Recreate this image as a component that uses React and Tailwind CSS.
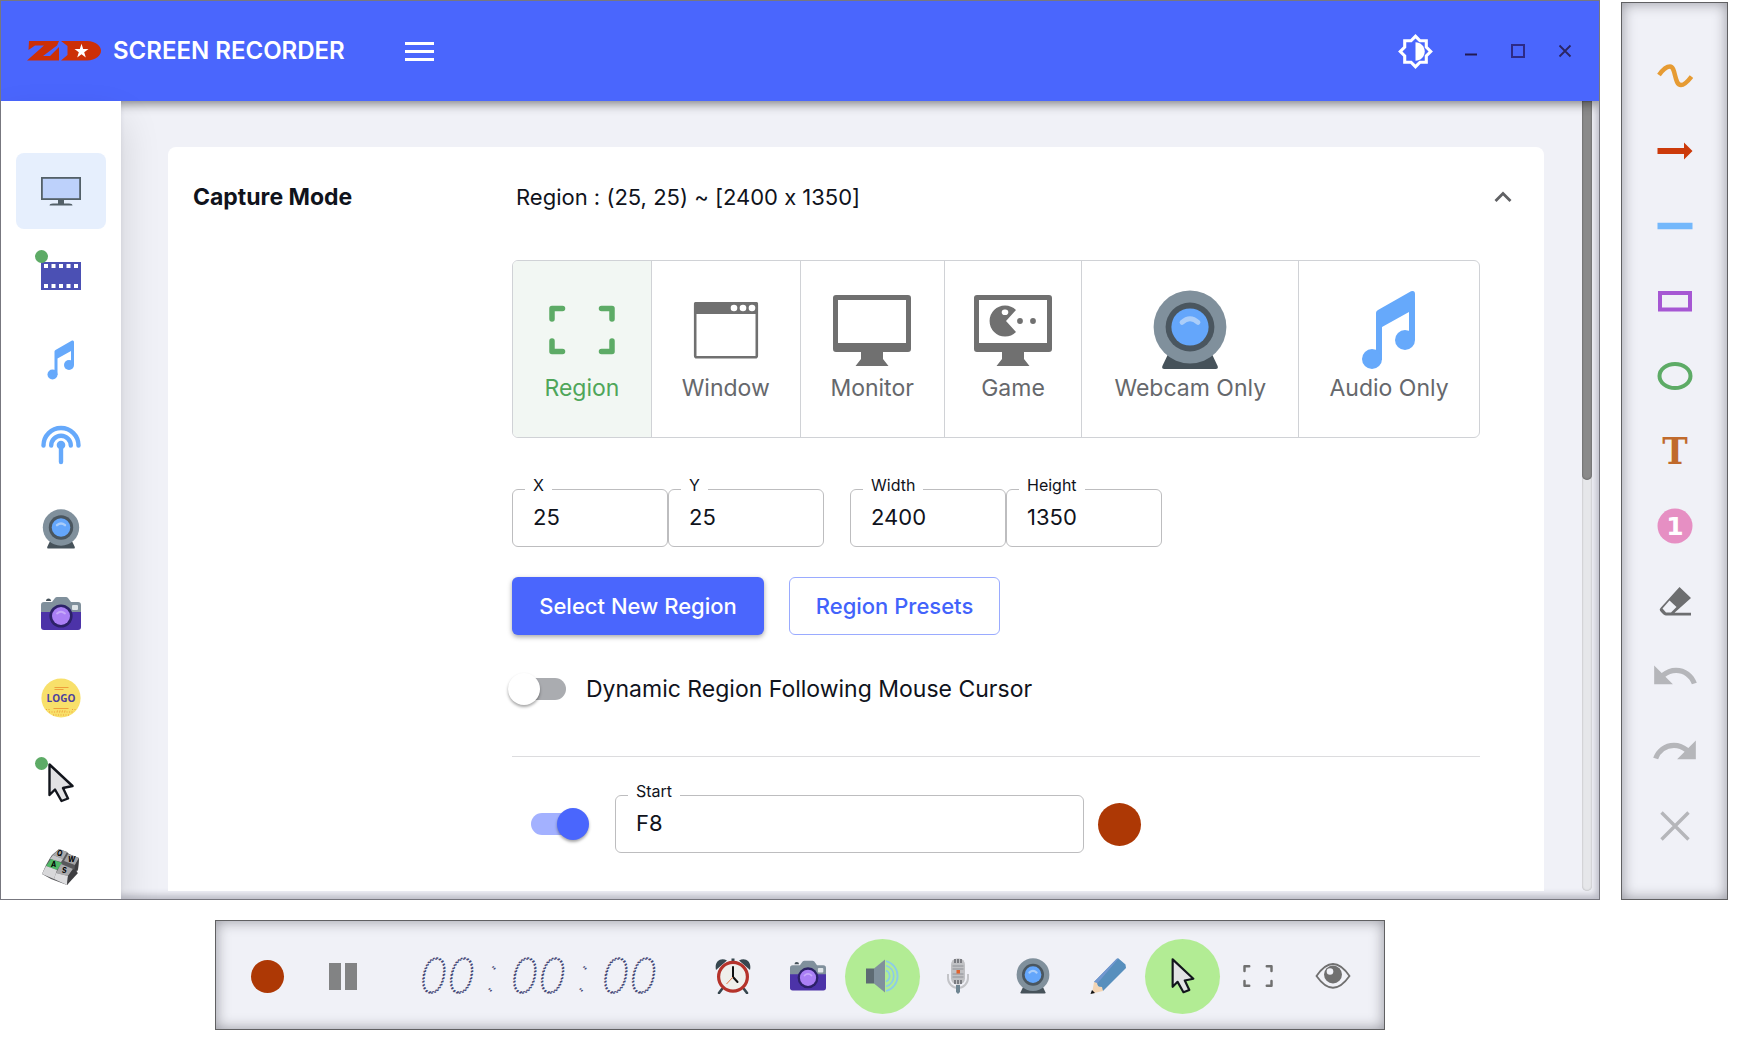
import { useState } from "react";
import { MdUndo, MdRedo } from "react-icons/md";

function LogoMark() {
  return (
    <svg width="74" height="20" viewBox="0 0 74 20" fill="#cc2f06" aria-hidden="true">
      <path d="M2 0H32L30 4.500 16 15H23L32 6V19.500H0L17 4.500H8L1.500 9Z" />
      <path d="M34 0H60C69 0.500 74 5 74 9.700S69 19 60 19.500H34L40.500 14V5Z" />
      <path
        fill="#fff"
        d="M54.500 2.800 56.200 8H61.500L57.200 11.200 58.800 16.500 54.500 13.300 50.200 16.500 51.800 11.200 47.500 8H52.800Z"
      />
    </svg>
  );
}

function BrightnessIcon() {
  return (
    <svg width="37" height="37" viewBox="0 0 24 24" fill="#fff" aria-hidden="true">
      <path
        fillRule="evenodd"
        d="M20 8.690V4h-4.690L12 .690 8.690 4H4v4.690L.690 12 4 15.310V20h4.690L12 23.310 15.310 20H20v-4.690L23.310 12 20 8.690zM18 14.480V18h-3.520L12 20.480 9.520 18H6v-3.520L3.520 12 6 9.520V6h3.520L12 3.520 14.480 6H18v3.520L20.480 12 18 14.480z"
      />
      <path d="M12 6v12c3.310 0 6-2.690 6-6s-2.690-6-6-6z" />
    </svg>
  );
}

function DesktopIcon() {
  return (
    <svg width="40" height="40" viewBox="0 0 40 40" aria-hidden="true">
      <rect y="6" width="40" height="23" fill="#536068" />
      <rect x="1.800" y="7.800" width="36.400" height="19.400" fill="#bdd1fb" />
      <path d="M17 29h6v3.500h5q3.500 0 3.500 2h-23q0-2 3.500-2h5z" fill="#536068" />
    </svg>
  );
}

function FilmIcon() {
  return (
    <svg width="40" height="40" viewBox="0 0 40 40" aria-hidden="true">
      <rect y="6" width="40" height="28" fill="#4b50b4" />
      {[3, 10.5, 18, 25.5, 33].map((x) => (
        <g key={x} fill="#fff">
          <rect x={x} y="8" width="4" height="4" />
          <rect x={x} y="28" width="4" height="4" />
        </g>
      ))}
    </svg>
  );
}

function MusicIcon({ size = 40 }) {
  return (
    <svg width={size} height={size} viewBox="0 0 40 40" fill="#66a9fb" aria-hidden="true">
      <path d="M13.500 11.500Q13.500 10.500 14.500 10L31 0.600Q33 0 33 2V25H30V11L16.500 18.500V35H13.500Z" />
      <circle cx="28" cy="25" r="5" />
      <circle cx="11.500" cy="34.500" r="5" />
    </svg>
  );
}

function BroadcastIcon() {
  return (
    <svg width="40" height="40" viewBox="0 0 40 40" fill="none" stroke="#66a9fb" strokeWidth="4.400" strokeLinecap="round" aria-hidden="true">
      <path d="M2.500 20.500a17.500 17.500 0 0 1 35 0" />
      <path d="M10.200 20.500a9.800 9.800 0 0 1 19.600 0" />
      <path d="M20 20v17" />
      <circle cx="20" cy="20" r="4.300" fill="#66a9fb" stroke="none" />
    </svg>
  );
}

function WebcamIcon({ size = 40 }) {
  return (
    <svg width={size} height={size} viewBox="0 0 40 40" aria-hidden="true">
      <path d="M10 30h20l3.800 8q.5 1.500-1 1.500H7.200q-1.500 0-1-1.500z" fill="#46525a" />
      <circle cx="20" cy="18.500" r="18.200" fill="#80909c" />
      <circle cx="20" cy="18.500" r="12.200" fill="#4a565f" />
      <circle cx="20" cy="18.500" r="9.300" fill="#64a6fb" />
      <path d="M16 16.200q4-3.600 8 0" fill="none" stroke="#aacdf9" strokeWidth="2.400" strokeLinecap="round" />
    </svg>
  );
}

function CameraIcon({ size = 40 }) {
  return (
    <svg width={size} height={size} viewBox="0 0 40 40" aria-hidden="true">
      <path d="M5 7q0-2.500 2.500-2.500T10 7z" fill="#46525a" />
      <path d="M3 8h8l3-4q.8-1 2-1h9q1.200 0 2 1l3 4h7q3 0 3 3v8H0v-8q0-3 3-3z" fill="#80909c" />
      <path d="M0 18h40v15q0 3-3 3H3q-3 0-3-3z" fill="#4c33a8" />
      <circle cx="20" cy="22" r="11.600" fill="#2c2168" />
      <circle cx="20" cy="22" r="9" fill="#aa7ff5" />
      <path d="M16 19.500q4-3.600 8 0" fill="none" stroke="#c6a9fa" strokeWidth="1.800" strokeLinecap="round" />
      <rect x="31" y="11" width="6" height="5" rx="1" fill="#dfe5e8" />
    </svg>
  );
}

function BadgeIcon() {
  return (
    <svg width="40" height="40" viewBox="0 0 40 40" aria-hidden="true">
      <circle cx="20" cy="20" r="19.600" fill="#f8e06a" />
      <g stroke="#ee9f3b" strokeWidth="1">
        <path d="M13.500 9.500h14M13.500 11.500h9M12.500 30.500h15" />
        <path d="M16 33h9M5 31.500h4M31 31.500h4M8 34h24M12 37h16" strokeDasharray="1 1.500" />
      </g>
      <text x="20" y="24" textAnchor="middle" fontFamily="Open Sans, sans-serif" fontWeight="700" fontSize="10" fill="#4c3f9f">
        LOGO
      </text>
    </svg>
  );
}

function CursorIcon({ size = 40 }) {
  return (
    <svg width={size} height={size} viewBox="0 0 40 40" aria-hidden="true">
      <path
        d="M8.500 1.500V32L14 26.500 20.500 38 27 35.500 22 25 31.500 23Z"
        fill="#e2e2e4"
        stroke="#12151c"
        strokeWidth="2.400"
        strokeLinejoin="round"
      />
    </svg>
  );
}

function KeysIcon() {
  return (
    <svg width="40" height="40" viewBox="0 0 40 40" fontFamily="Inter, sans-serif" fontWeight="700" fontSize="7" aria-hidden="true">
      <path d="M18 2 26 5 28 7 38 11 37 23 26 38 10 32 1 27 5 18 9 11 11 8Z" fill="#58585b" />
      <path d="M18 2 26 5 22 12 12 8Z" fill="#a9a9ab" />
      <path d="M12 8 22 12 20 15 9 12Z" fill="#c6c6c8" />
      <path d="M27 7 38 11 34 18 23 14Z" fill="#a3a3a5" />
      <path d="M38 11 37 22 33 25 34 18Z" fill="#3e3e41" />
      <path d="M10 12 21 16 16 23 5 19Z" fill="#4fb866" />
      <path d="M5 19 16 23 13 32 1 27Z" fill="#d8d8da" />
      <path d="M20 17 32 22 27 29 15 26Z" fill="#a9a9ab" />
      <path d="M15 26 27 29 26 38 13 32Z" fill="#dcdcde" />
      <path d="M32 22 37 26 26 38 27 29Z" fill="#3e3e41" />
      <text x="16" y="9" fontStyle="italic">Q</text>
      <text x="27" y="15" fontStyle="italic">W</text>
      <text x="10" y="20" fontStyle="italic">A</text>
      <text x="21" y="26" fontStyle="italic">S</text>
    </svg>
  );
}

function RegionIcon({ size, color }) {
  return (
    <svg width={size} height={size} viewBox="0 0 80 80" fill="none" stroke={color} strokeWidth="5.500" strokeLinecap="round" strokeLinejoin="round" aria-hidden="true">
      <path d="M10 29V18.500H20.500M59.500 18.500H70V29M70 51V61.500H59.500M20.500 61.500H10V51" />
    </svg>
  );
}

function WindowIcon() {
  return (
    <svg width="80" height="80" viewBox="0 0 80 80" aria-hidden="true">
      <rect x="9.200" y="13.200" width="61.600" height="54" rx="1.500" fill="none" stroke="#707070" strokeWidth="2.600" />
      <rect x="8" y="12" width="64" height="12" rx="1.500" fill="#707070" />
      <g fill="#fff">
        <circle cx="48" cy="18" r="3.300" />
        <circle cx="57" cy="18" r="3.300" />
        <circle cx="66" cy="18" r="3.300" />
      </g>
    </svg>
  );
}

function MonitorIcon({ game }) {
  return (
    <svg width="80" height="80" viewBox="0 0 80 80" fill="#707070" aria-hidden="true">
      <path fillRule="evenodd" d="M4 5H76Q79 5 79 8V59Q79 62 76 62H4Q1 62 1 59V8Q1 5 4 5ZM6 10V53H74V10Z" />
      <path d="M29 61H51V69L56.500 76H23.500L29 69Z" />
      {game && (
        <>
          <path fillRule="evenodd" d="M33 31 43 20A15.500 15.500 0 1 0 43 42ZM32 19.500A2.800 2.800 0 1 1 32 25A2.800 2.800 0 1 1 32 19.500Z" />
          <circle cx="47" cy="31" r="2.900" />
          <circle cx="60" cy="31" r="2.900" />
        </>
      )}
    </svg>
  );
}

function AlarmIcon() {
  return (
    <svg width="36" height="36" viewBox="0 0 36 36" aria-hidden="true">
      <path d="M7 31 4 35M29 31 32 35" stroke="#37474f" strokeWidth="2.600" strokeLinecap="round" />
      <path d="M1 12C-1 3 6-1 12 2.500ZM35 12C37 3 30-1 24 2.500Z" fill="#37474f" />
      <rect x="16.500" y="0.500" width="3" height="3" fill="#37474f" />
      <circle cx="18" cy="18.800" r="14.400" fill="#efefec" stroke="#b5332b" strokeWidth="3.200" />
      <path d="M18 9v10l4.500 5" fill="none" stroke="#111" strokeWidth="2" strokeLinecap="round" />
      <path d="M18 19l-6.500 7" stroke="#e0763f" strokeWidth="1" />
    </svg>
  );
}

function SpeakerIcon() {
  return (
    <svg width="36" height="36" viewBox="0 0 36 36" fill="none" aria-hidden="true">
      <rect x="1" y="10.500" width="8" height="15" fill="#5d6a73" />
      <path d="M9 10.500 20 1.500V34.500L9 25.500Z" fill="#80909c" />
      <g stroke="#8ccbe9" strokeWidth="1.800">
        <path d="M21 12.500a6 6 0 0 1 0 11" />
        <path d="M21 7.500a11 11 0 0 1 0 21" />
        <path d="M21 3a15.500 15.500 0 0 1 0 30" />
      </g>
    </svg>
  );
}

function MicIcon() {
  return (
    <svg width="36" height="36" viewBox="0 0 36 36" fill="none" aria-hidden="true">
      <path d="M8 16v4a10 10 0 0 0 20 0v-4" stroke="#c3c4c8" strokeWidth="2" />
      <path d="M16 27h4v7l-2 2-2-2z" fill="#6f8592" />
      <rect x="11" y="0.500" width="14" height="26" rx="6" fill="#c0c1c4" />
      <path d="M15 1v4M18 1v4M21 1v4M15 22v4M18 22v4M21 22v4" stroke="#4c4f55" strokeWidth="1.200" />
      <path d="M12.500 8h11M12.500 11h11M12.500 16h11M12.500 19h11" stroke="#8f9298" strokeWidth="1" />
      <rect x="16.500" y="12" width="3.500" height="3.500" fill="#e0622c" />
    </svg>
  );
}

function PencilIcon() {
  return (
    <svg width="36" height="36" viewBox="0 0 36 36" aria-hidden="true">
      <path d="M4 24 26 1.500Q27 0 28.500 0.500L35.500 6.500 36 10 13 33Z" fill="#578fbd" />
      <path d="M4 24 26 1.500Q27 0 28.500 0.500L6 27Z" fill="#7297cf" />
      <path d="M4 24 7 25 8 28.500 12 29 13 33 2 35.500Z" fill="#f3d5b5" />
      <path d="M2 32 0.500 36 5 35Z" fill="#111" />
    </svg>
  );
}

function EyeIcon() {
  return (
    <svg width="36" height="36" viewBox="0 0 36 36" aria-hidden="true">
      <path d="M1.500 18Q18-6 34.500 18 18 41.500 1.500 18Z" fill="none" stroke="#707070" strokeWidth="1.800" />
      <circle cx="18" cy="16.500" r="9" fill="#707070" />
      <circle cx="15" cy="13.500" r="3.300" fill="#f0f1f7" />
    </svg>
  );
}

function Tool({ children }) {
  return (
    <svg width="36" height="36" viewBox="0 0 36 36" fill="none" aria-hidden="true">
      {children}
    </svg>
  );
}

const SECTIONS = [
  { name: "Screen", icon: <DesktopIcon />, active: true },
  { name: "Video", icon: <FilmIcon />, dot: true },
  { name: "Audio", icon: <MusicIcon /> },
  { name: "Stream", icon: <BroadcastIcon /> },
  { name: "Webcam", icon: <WebcamIcon /> },
  { name: "Screenshot", icon: <CameraIcon /> },
  { name: "Watermark", icon: <BadgeIcon /> },
  { name: "Mouse", icon: <CursorIcon />, dot: true },
  { name: "Keyboard", icon: <KeysIcon /> },
];

const MODES = [
  { name: "Region", icon: <RegionIcon size={80} color="#5dab66" /> },
  { name: "Window", icon: <WindowIcon /> },
  { name: "Monitor", icon: <MonitorIcon /> },
  { name: "Game", icon: <MonitorIcon game /> },
  { name: "Webcam Only", icon: <WebcamIcon size={80} /> },
  { name: "Audio Only", icon: <MusicIcon size={80} /> },
];

const DRAW_TOOLS = [
  {
    name: "Freehand",
    icon: (
      <Tool>
        <path d="M2 17Q8 8.500 13 8.500C19 8.500 17 27 24 27Q28 27 34.500 18.500" stroke="#e69b33" strokeWidth="4.500" />
      </Tool>
    ),
  },
  {
    name: "Arrow",
    icon: (
      <Tool>
        <path d="M0.500 15H27V9.500L35.500 18 27 26.500V21H0.500Z" fill="#cc3a0a" />
      </Tool>
    ),
  },
  {
    name: "Line",
    icon: (
      <Tool>
        <path d="M0.500 18H35.500" stroke="#74b8fb" strokeWidth="6.500" />
      </Tool>
    ),
  },
  {
    name: "Rectangle",
    icon: (
      <Tool>
        <rect x="3" y="10" width="30" height="16.500" stroke="#a657d3" strokeWidth="4" />
      </Tool>
    ),
  },
  {
    name: "Ellipse",
    icon: (
      <Tool>
        <ellipse cx="18" cy="18" rx="15.500" ry="12" stroke="#5dab66" strokeWidth="4" />
      </Tool>
    ),
  },
  {
    name: "Text",
    icon: (
      <svg width="48" height="60" viewBox="0 0 48 60" aria-hidden="true">
        <text x="24" y="43" textAnchor="middle" fontFamily="DejaVu Serif Condensed, DejaVu Serif, serif" fontWeight="700" fontSize="38" fill="#c06a2c">
          T
        </text>
      </svg>
    ),
  },
  {
    name: "Number",
    icon: (
      <Tool>
        <circle cx="18" cy="18" r="17.500" fill="#e68fc3" />
        <text x="18" y="27" textAnchor="middle" fontFamily="DejaVu Sans, sans-serif" fontWeight="700" fontSize="25" fill="#fff">
          1
        </text>
      </Tool>
    ),
  },
  {
    name: "Eraser",
    icon: (
      <Tool>
        <path d="M22.500 4 34 15 17.500 29.800H34V32.500H9Q7 32.500 3.200 28 2 26.500 3.500 25Z" fill="#6d6e70" />
        <path d="M12.500 17.500 19.500 24 14 29.500H9L5.500 25.500Z" fill="#f0f1f7" />
      </Tool>
    ),
  },
  { name: "Undo", icon: <MdUndo size={50} color="#b5b6ba" /> },
  { name: "Redo", icon: <MdRedo size={50} color="#b5b6ba" /> },
  {
    name: "Clear",
    icon: (
      <Tool>
        <path d="M4.500 4.500 31.500 31.500M31.500 4.500 4.500 31.500" stroke="#b5b6ba" strokeWidth="3.400" />
      </Tool>
    ),
  },
];

const QUICK_ACTIONS = [
  { name: "Schedule", icon: <AlarmIcon /> },
  { name: "Screenshot", icon: <CameraIcon size={36} /> },
  { name: "Speaker", icon: <SpeakerIcon />, on: true },
  { name: "Microphone", icon: <MicIcon /> },
  { name: "Webcam", icon: <WebcamIcon size={36} /> },
  { name: "Draw", icon: <PencilIcon /> },
  { name: "Mouse cursor", icon: <CursorIcon size={36} />, on: true },
  { name: "Region", icon: <RegionIcon size={36} color="#707070" /> },
  { name: "Preview", icon: <EyeIcon /> },
];

function Field({ id, label, value, className }) {
  return (
    <fieldset className={`h-[70px] rounded-md border border-[#bdbdbf] ${className}`}>
      <legend className="ml-3 px-2 pb-2 text-base leading-4">
        <label htmlFor={id}>{label}</label>
      </legend>
      <input
        id={id}
        defaultValue={value}
        className="block h-8 w-full bg-transparent px-5 text-[22px] outline-none"
      />
    </fieldset>
  );
}

function Switch({ id, checked, onChange, label }) {
  return (
    <span className="relative flex h-8 w-[58px] shrink-0 items-center">
      <input
        id={id}
        type="checkbox"
        role="switch"
        aria-label={label}
        checked={checked}
        onChange={onChange}
        className="peer absolute inset-0 z-10 cursor-pointer opacity-0"
      />
      <span className="ml-2 h-[22px] w-full rounded-full bg-[#aaacb0] peer-checked:mr-2 peer-checked:ml-0 peer-checked:bg-[#a3b1ff]" />
      <span className="absolute left-0 size-8 rounded-full bg-white shadow-[0_2px_3px_rgba(0,0,0,0.35)] peer-checked:right-0 peer-checked:left-auto peer-checked:bg-[#4a66fd]" />
    </span>
  );
}

const PANEL = "border border-[#606062] bg-[#f0f1f7] shadow-[inset_0_0_14px_rgba(60,60,70,0.5)]";

export default function App() {
  const [mode, setMode] = useState("Region");
  const [dynamic, setDynamic] = useState(false);
  const [startKey, setStartKey] = useState(true);

  return (
    <div className="grid h-screen grid-cols-[minmax(0,1fr)_107px] grid-rows-[minmax(0,1fr)_110px] gap-x-[21px] gap-y-5 bg-white pr-[22px] pb-5 font-[Inter,sans-serif] text-[#10131c] [font-feature-settings:'calt'_0]">
      <div className="flex flex-col overflow-hidden border border-[#77777f] bg-[#f0f1f7]">
        <header className="relative z-10 flex h-[100px] shrink-0 items-center bg-[#4a66fd] pr-[27px] pl-[26px] shadow-[0_3px_10px_rgba(0,0,0,0.45)]">
          <LogoMark />
          <h1 className="ml-3 text-2xl font-semibold whitespace-nowrap text-white">SCREEN RECORDER</h1>
          <button aria-label="Menu" className="ml-[60px] flex flex-col gap-[5px]">
            <span className="h-[3px] w-[29px] bg-white" />
            <span className="h-[3px] w-[29px] bg-white" />
            <span className="h-[3px] w-[29px] bg-white" />
          </button>
          <button aria-label="Theme" className="ml-auto">
            <BrightnessIcon />
          </button>
          <div className="ml-[30px] flex items-center gap-[33px]">
            <button aria-label="Minimize">
              <svg width="14" height="14" viewBox="0 0 14 14" stroke="#221a52" strokeWidth="2">
                <path d="M1 10.500h12" />
              </svg>
            </button>
            <button aria-label="Maximize">
              <svg width="14" height="14" viewBox="0 0 14 14" fill="none" stroke="#2d2a86" strokeWidth="2">
                <path d="M1 1h12v12H1z" />
              </svg>
            </button>
            <button aria-label="Close">
              <svg width="14" height="14" viewBox="0 0 14 14" stroke="#2b2563" strokeWidth="1.800">
                <path d="M1.500 1.500l11 11M12.500 1.500l-11 11" />
              </svg>
            </button>
          </div>
        </header>

        <div className="flex min-h-0 flex-1">
          <nav className="relative z-20 w-[120px] shrink-0 overflow-clip bg-white pt-[52px] shadow-[0_20px_40px_rgba(0,0,0,0.14)]">
            <ul className="flex h-[752px] flex-col items-center justify-between">
              {SECTIONS.map((s) => (
                <li key={s.name}>
                  <button
                    aria-label={s.name}
                    className={`relative flex h-[76px] w-[90px] items-center justify-center rounded-lg ${s.active ? "bg-[#e6effd]" : ""}`}
                  >
                    {s.icon}
                    {s.dot && <span className="absolute top-3 left-[19px] size-[13px] rounded-full bg-[#5dab66]" />}
                  </button>
                </li>
              ))}
            </ul>
          </nav>

          <main className="flex min-w-0 flex-1 pr-[7px] pb-2 shadow-[inset_-3px_-4px_6px_rgba(70,70,90,0.3)]">
            <div className="min-w-0 flex-1 overflow-hidden pt-[46px] pr-[38px] pl-[47px]">
              <section className="h-full rounded-t-lg bg-white pt-8 pr-16 pl-[25px]">
                <div className="flex h-9 items-center">
                  <h2 className="w-[323px] shrink-0 text-[23px] font-bold">Capture Mode</h2>
                  <p className="flex-1 text-[22px]">Region : (25, 25) ~ [2400 x 1350]</p>
                  <button aria-label="Collapse" className="-mr-8">
                    <svg width="18" height="12" viewBox="0 0 18 12" fill="none" stroke="#606164" strokeWidth="2.800">
                      <path d="M1.500 10 9 2.500 16.500 10" />
                    </svg>
                  </button>
                </div>

                <div className="mt-[45px] ml-[319px]">
                  <div className="grid h-[178px] grid-cols-[139fr_149fr_144fr_138fr_217fr_180fr] overflow-hidden rounded-md border border-[#d0d2d6]">
                    {MODES.map((m) => (
                      <button
                        key={m.name}
                        aria-pressed={mode === m.name}
                        onClick={() => setMode(m.name)}
                        className={`flex flex-col items-center border-r border-[#d0d2d6] pt-[29px] last:border-r-0 ${
                          mode === m.name ? "bg-[#f2f7f3] text-[#4fa65a]" : "text-[#66686c]"
                        }`}
                      >
                        {m.icon}
                        <span className="text-[23px] leading-9 whitespace-nowrap">{m.name}</span>
                      </button>
                    ))}
                  </div>

                  <div className="mt-[39px] flex">
                    <Field id="x" label="X" value="25" className="w-[156px]" />
                    <Field id="y" label="Y" value="25" className="w-[156px]" />
                    <Field id="width" label="Width" value="2400" className="ml-[26px] w-[156px]" />
                    <Field id="height" label="Height" value="1350" className="w-[156px]" />
                  </div>

                  <div className="mt-[30px] flex gap-[25px]">
                    <button className="h-[58px] w-[252px] rounded-md bg-[#4a66fd] text-[22px] font-medium text-white shadow-[0_2px_5px_rgba(0,0,0,0.35)]">
                      Select New Region
                    </button>
                    <button className="h-[58px] w-[211px] rounded-md border border-[#9aabff] text-[22px] font-medium text-[#4263fb]">
                      Region Presets
                    </button>
                  </div>

                  <div className="mt-[38px] -ml-1 flex items-center gap-5">
                    <Switch id="dynamic" checked={dynamic} onChange={() => setDynamic(!dynamic)} />
                    <label htmlFor="dynamic" className="text-[23px] leading-8">
                      Dynamic Region Following Mouse Cursor
                    </label>
                  </div>

                  <hr className="mt-[51px] border-[#dcdcde]" />

                  <div className="mt-[26px] flex items-center pl-[19px]">
                    <span className="pt-3">
                      <Switch
                        id="start-on"
                        label="Start hotkey"
                        checked={startKey}
                        onChange={() => setStartKey(!startKey)}
                      />
                    </span>
                    <Field id="start" label="Start" value="F8" className="ml-[26px] w-[469px]" />
                    <span className="mt-3 ml-[14px] size-[43px] rounded-full bg-[#ad3805]" />
                  </div>
                </div>
              </section>
            </div>
            <div className="w-[10px] rounded-b-full bg-[#e6e7ea] shadow-[inset_0_0_2px_rgba(0,0,0,0.3)]">
              <div className="h-[48%] rounded-b-full bg-[#8a8a8a] shadow-[inset_0_0_2px_rgba(0,0,0,0.5)]" />
            </div>
          </main>
        </div>
      </div>

      <aside className={`mt-[2px] flex flex-col items-center justify-center ${PANEL}`}>
        {DRAW_TOOLS.map((t) => (
          <button key={t.name} aria-label={t.name} className="flex h-[75px] w-[75px] items-center justify-center">
            {t.icon}
          </button>
        ))}
      </aside>

      <footer className={`flex items-center justify-self-center px-[14px] pt-[2px] ${PANEL}`}>
        <button aria-label="Record" className="flex size-[75px] items-center justify-center">
          <span className="size-[33px] rounded-full bg-[#ad3805]" />
        </button>
        <button aria-label="Pause" className="flex size-[75px] items-center justify-center gap-1">
          <span className="h-[27px] w-3 bg-[#828384]" />
          <span className="h-[27px] w-3 bg-[#828384]" />
        </button>
        <svg
          role="timer"
          width="315"
          height="75"
          viewBox="0 0 315 75"
          fill="none"
          stroke="#3f4574"
          strokeWidth="1.300"
          strokeDasharray="1.800 1.600"
          textAnchor="middle"
          fontFamily="Inter, sans-serif"
          fontStyle="italic"
          fontWeight="100"
          fontSize="47"
        >
          <text x="67" y="54">00</text>
          <text x="112" y="52">:</text>
          <text x="158" y="54">00</text>
          <text x="203" y="52">:</text>
          <text x="249" y="54">00</text>
        </svg>
        {QUICK_ACTIONS.map((a) => (
          <button
            key={a.name}
            aria-label={a.name}
            className={`flex size-[75px] items-center justify-center rounded-full ${a.on ? "bg-[#b2ec94]" : ""}`}
          >
            {a.icon}
          </button>
        ))}
      </footer>
    </div>
  );
}
